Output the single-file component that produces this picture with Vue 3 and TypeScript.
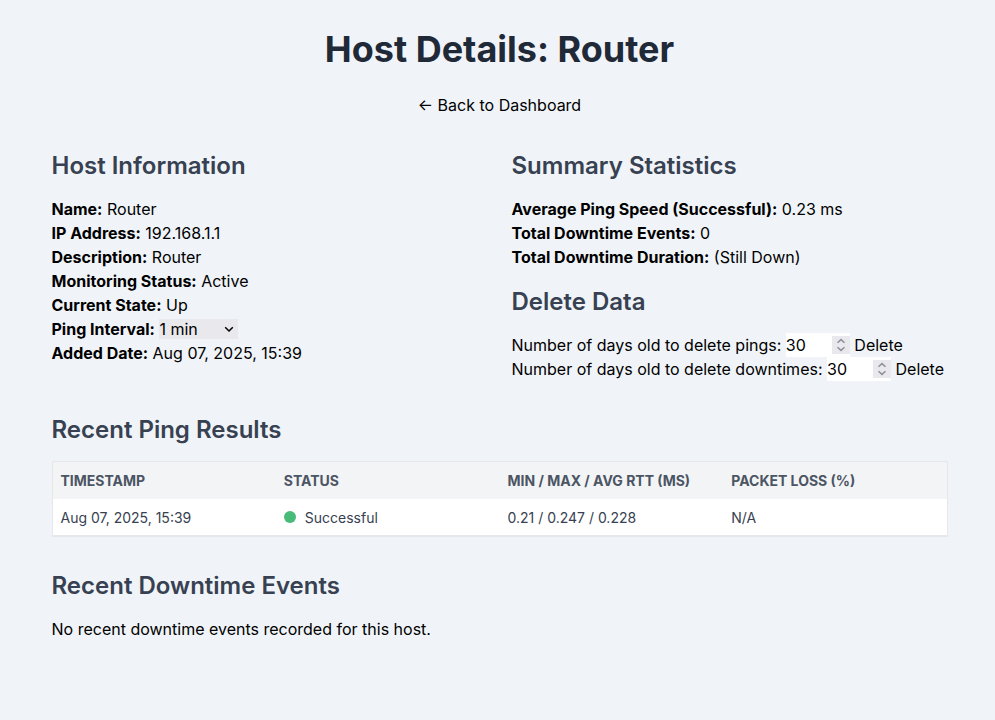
<script setup lang="ts">
import { ref } from 'vue'

interface Fact {
  label: string
  value: string
}

interface PingRow {
  timestamp: string
  status: string
  rtt: string
  loss: string
}

const beforeInterval: Fact[] = [
  { label: 'Name:', value: 'Router' },
  { label: 'IP Address:', value: '192.168.1.1' },
  { label: 'Description:', value: 'Router' },
  { label: 'Monitoring Status:', value: 'Active' },
  { label: 'Current State:', value: 'Up' },
]

const summary: Fact[] = [
  { label: 'Average Ping Speed (Successful):', value: '0.23 ms' },
  { label: 'Total Downtime Events:', value: '0' },
  { label: 'Total Downtime Duration:', value: '(Still Down)' },
]

const columns: string[] = ['Timestamp', 'Status', 'Min / Max / Avg RTT (ms)', 'Packet Loss (%)']

const pings: PingRow[] = [
  { timestamp: 'Aug 07, 2025, 15:39', status: 'Successful', rtt: '0.21 / 0.247 / 0.228', loss: 'N/A' },
]

const interval = ref('1')

const deletions = ref([
  { id: 'ping-days', label: 'Number of days old to delete pings:', days: 30 },
  { id: 'downtime-days', label: 'Number of days old to delete downtimes:', days: 30 },
])
</script>

<template>
  <div class="page">
    <main class="content">
      <header class="header">
        <h1>Host Details: Router</h1>
        <a href="#">← Back to Dashboard</a>
      </header>

      <div class="columns">
        <section>
          <h2>Host Information</h2>
          <p v-for="fact in beforeInterval" :key="fact.label">
            <strong>{{ fact.label }}</strong> {{ fact.value }}
          </p>
          <p>
            <label for="interval"><strong>Ping Interval:</strong></label>{{ ' ' }}
            <span class="field">
              <select id="interval" v-model="interval">
                <option value="1">1 min</option>
                <option value="5">5 min</option>
                <option value="10">10 min</option>
              </select>
              <svg class="chevron" viewBox="0 0 10 10" aria-hidden="true">
                <path d="M1.2 3.2 L5 7 L8.8 3.2" />
              </svg>
            </span>
          </p>
          <p><strong>Added Date:</strong> Aug 07, 2025, 15:39</p>
        </section>

        <section>
          <h2>Summary Statistics</h2>
          <p v-for="fact in summary" :key="fact.label">
            <strong>{{ fact.label }}</strong> {{ fact.value }}
          </p>
          <h2 class="follow">Delete Data</h2>
          <form v-for="item in deletions" :key="item.id" @submit.prevent>
            <label :for="item.id">{{ item.label }}</label>{{ ' ' }}
            <span class="field">
              <input :id="item.id" v-model="item.days" type="number" min="1" />
              <svg class="spinner" viewBox="0 0 18 18" aria-hidden="true">
                <path d="M5.5 6.8 L9 3.6 L12.5 6.8 M5.5 11.2 L9 14.4 L12.5 11.2" />
              </svg>
            </span>{{ ' ' }}
            <button type="submit">Delete</button>
          </form>
        </section>
      </div>

      <section class="block">
        <h2>Recent Ping Results</h2>
        <table>
          <thead>
            <tr>
              <th v-for="column in columns" :key="column" scope="col">{{ column }}</th>
            </tr>
          </thead>
          <tbody>
            <tr v-for="ping in pings" :key="ping.timestamp">
              <td>{{ ping.timestamp }}</td>
              <td><span class="dot"></span>{{ ping.status }}</td>
              <td>{{ ping.rtt }}</td>
              <td>{{ ping.loss }}</td>
            </tr>
          </tbody>
        </table>
      </section>

      <section class="block">
        <h2>Recent Downtime Events</h2>
        <p>No recent downtime events recorded for this host.</p>
      </section>
    </main>
  </div>
</template>

<style>
body {
  background: #f0f4f8;
}
</style>

<style scoped>
.page {
  padding: 24px 47px 24px 51px;
  font: 16px/24px Inter, "Liberation Sans", sans-serif;
  color: #000;
}

.content {
  max-width: 896px;
  margin: 0 auto;
}

.header {
  margin-bottom: 32px;
  text-align: center;
}

h1,
h2,
p {
  margin: 0;
}

h1 {
  margin-bottom: 19px;
  font-size: 36px;
  line-height: 50px;
  font-weight: 700;
  color: #1f2937;
}

h2 {
  margin-bottom: 14px;
  font-size: 24px;
  line-height: 34px;
  font-weight: 600;
  color: #374151;
}

.follow {
  margin-top: 16px;
}

strong {
  font-weight: 700;
}

a {
  color: inherit;
  text-decoration: none;
}

.columns {
  display: grid;
  grid-template-columns: 1fr 1fr;
  column-gap: 24px;
}

.field {
  position: relative;
  display: inline-flex;
}

select,
input,
button {
  box-sizing: border-box;
  margin: 0;
  padding: 0;
  border: 0;
  border-radius: 0;
  font: inherit;
  color: inherit;
}

select {
  width: 79px;
  height: 20px;
  line-height: 20px;
  appearance: none;
  background: #e9e9ed;
}

.chevron {
  position: absolute;
  top: 5px;
  right: 4px;
  width: 10px;
  height: 10px;
  fill: none;
  stroke: #000;
  stroke-width: 1.5;
  pointer-events: none;
}

input {
  width: 64px;
  height: 24px;
  background: #fff;
  appearance: textfield;
}

.spinner {
  position: absolute;
  top: 3px;
  right: 0;
  width: 18px;
  height: 18px;
  background: #e9e9ed;
  fill: none;
  stroke: #8f8f9d;
  stroke-width: 1.5;
  pointer-events: none;
}

button {
  background: transparent;
  cursor: pointer;
}

.block {
  margin-top: 32px;
}

table {
  width: 100%;
  table-layout: fixed;
  border-collapse: collapse;
  border: 1px solid #e5e7eb;
  border-bottom-width: 2px;
  background: #fff;
  font-size: 14px;
  line-height: 21px;
  color: #374151;
}

th,
td {
  padding: 8px;
  text-align: left;
}

td {
  padding-bottom: 7px;
}

th {
  background: #f3f4f6;
  font-weight: 700;
  text-transform: uppercase;
  color: #4b5563;
}

.dot {
  display: inline-block;
  width: 12px;
  height: 12px;
  margin-right: 9px;
  border-radius: 50%;
  background: #48bb78;
}
</style>
